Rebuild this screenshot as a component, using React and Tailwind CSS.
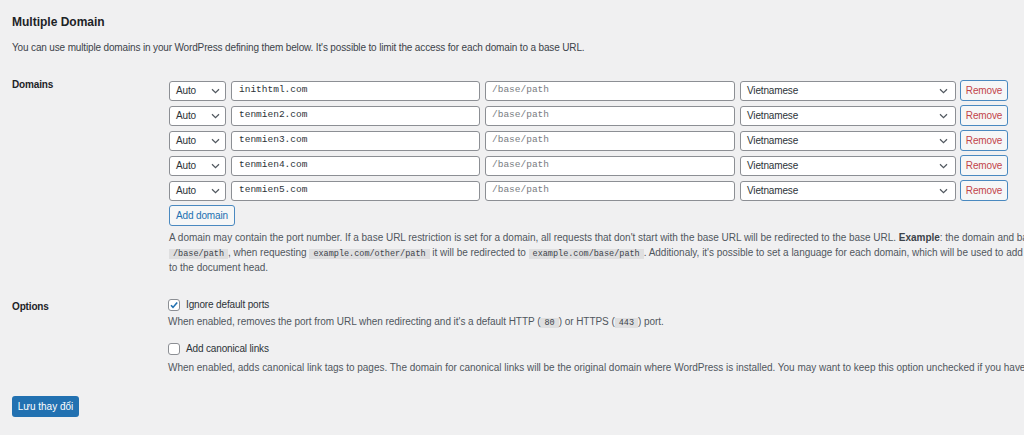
import { useState } from "react";

const domains = [
  "inithtml.com",
  "tenmien2.com",
  "tenmien3.com",
  "tenmien4.com",
  "tenmien5.com",
];

function Chevron() {
  return (
    <svg width="9" height="6" viewBox="0 0 9 6" className="shrink-0">
      <path d="M1 1.2l3.5 3.4L8 1.2" fill="none" stroke="#50575e" strokeWidth="1.2" />
    </svg>
  );
}

function Code({ children }) {
  return (
    <code className="bg-black/[0.07] px-[4px] font-mono text-[8.5px] leading-none tracking-normal text-[#3c434a]">
      {children}
    </code>
  );
}

function Checkbox({ checked, onChange }) {
  return (
    <button
      type="button"
      onClick={onChange}
      className="flex h-[12px] w-[12px] shrink-0 items-center justify-center rounded-[3px] border border-[#8c8f94] bg-white"
    >
      {checked ? (
        <svg width="10" height="10" viewBox="0 0 10 10">
          <path d="M2 5.2l2 2.2L8.2 2.4" fill="none" stroke="#2271b1" strokeWidth="1.6" />
        </svg>
      ) : null}
    </button>
  );
}

function DomainRow({ host }) {
  return (
    <div className="flex h-[21px] items-center">
      <div className="flex h-[20px] w-[57px] items-center justify-between rounded-[3px] border border-[#8c8f94] bg-white pl-[6px] pr-[5px] text-[10px] text-[#2c3338]">
        <span>Auto</span>
        <Chevron />
      </div>
      <div className="ml-[5px] flex h-[20px] w-[249px] items-center rounded-[3px] border border-[#8c8f94] bg-white px-[7px] font-mono text-[9.5px] tracking-normal text-[#2c3338]">
        {host}
      </div>
      <div className="ml-[5px] flex h-[20px] w-[250px] items-center rounded-[3px] border border-[#8c8f94] bg-white px-[6px] font-mono text-[9.5px] tracking-normal text-[#787c82]">
        /base/path
      </div>
      <div className="ml-[5px] flex h-[20px] w-[216px] items-center justify-between rounded-[3px] border border-[#8c8f94] bg-white pl-[6px] pr-[7px] text-[10px] text-[#2c3338]">
        <span>Vietnamese</span>
        <Chevron />
      </div>
      <button className="ml-[4px] h-[21px] w-[48px] rounded-[3px] border border-[#4a89c0] bg-[#f6f7f7] text-[10px] text-[#c2444a]">
        Remove
      </button>
    </div>
  );
}

export default function App() {
  const [ignorePorts, setIgnorePorts] = useState(true);
  const [canonical, setCanonical] = useState(false);

  return (
    <div className="min-h-screen w-full overflow-hidden bg-[#f0f0f1] px-[12px] pt-[14px] font-['Liberation_Sans',Arial,sans-serif] tracking-[-0.15px] text-[#3c434a]">
      <h2 className="h-[16px] text-[12px] font-semibold leading-[16px] tracking-normal text-[#1d2327]">
        Multiple Domain
      </h2>
      <p className="mt-[10px] text-[10px] leading-[15px]">
        You can use multiple domains in your WordPress defining them below. It's possible to limit the access for each domain to a base URL.
      </p>

      {/* Domains */}
      <div className="mt-[24px] flex">
        <div className="-mt-[2px] w-[157px] shrink-0 text-[10px] font-semibold leading-[15px] text-[#1d2327]">
          Domains
        </div>
        <div className="min-w-0">
          <div className="mt-px flex flex-col gap-[4px]">
            {domains.map((host) => (
              <DomainRow key={host} host={host} />
            ))}
          </div>
          <button className="mt-[4px] h-[21px] w-[66px] rounded-[3px] border border-[#4a89c0] bg-[#f6f7f7] text-[10px] text-[#2271b1]">
            Add domain
          </button>
          <p className="mt-[4px] whitespace-nowrap text-[10px] leading-[15px] tracking-[-0.02px] text-[#50575e]">
            A domain may contain the port number. If a base URL restriction is set for a domain, all requests that don't start with the base URL will be redirected to the base URL. <b className="text-[#3c434a]">Example</b>: the domain and base URL are <Code>example.com</Code> and
            <br />
            <Code>/base/path</Code>, when requesting <Code>example.com/other/path</Code> it will be redirected to <Code>example.com/base/path</Code>. Additionaly, it's possible to set a language for each domain, which will be used to add <Code>&lt;link&gt;</Code> tag with a <Code>hreflang</Code> attribute
            <br />
            to the document head.
          </p>
        </div>
      </div>

      {/* Options */}
      <div className="mt-[23px] flex">
        <div className="mt-px w-[156px] shrink-0 text-[10px] font-semibold leading-[15px] text-[#1d2327]">
          Options
        </div>
        <div className="min-w-0">
          <label className="flex h-[13px] items-center gap-[6px] text-[10px] text-[#2c3338]">
            <Checkbox checked={ignorePorts} onChange={() => setIgnorePorts(!ignorePorts)} />
            Ignore default ports
          </label>
          <p className="mt-[3px] whitespace-nowrap text-[10px] leading-[15px] tracking-[-0.05px] text-[#50575e]">
            When enabled, removes the port from URL when redirecting and it's a default HTTP (<Code>80</Code>) or HTTPS (<Code>443</Code>) port.
          </p>
          <label className="mt-[13px] flex h-[13px] items-center gap-[6px] text-[10px] text-[#2c3338]">
            <Checkbox checked={canonical} onChange={() => setCanonical(!canonical)} />
            Add canonical links
          </label>
          <p className="mt-[5px] whitespace-nowrap text-[10px] leading-[15px] tracking-[-0.02px] text-[#50575e]">
            When enabled, adds canonical link tags to pages. The domain for canonical links will be the original domain where WordPress is installed. You may want to keep this option unchecked if you have a multilingual site.
          </p>
        </div>
      </div>

      <button className="mt-[21px] h-[21px] w-[67px] rounded-[3px] bg-[#2271b1] text-[10px] tracking-normal text-white">
        Lưu thay đổi
      </button>
    </div>
  );
}
